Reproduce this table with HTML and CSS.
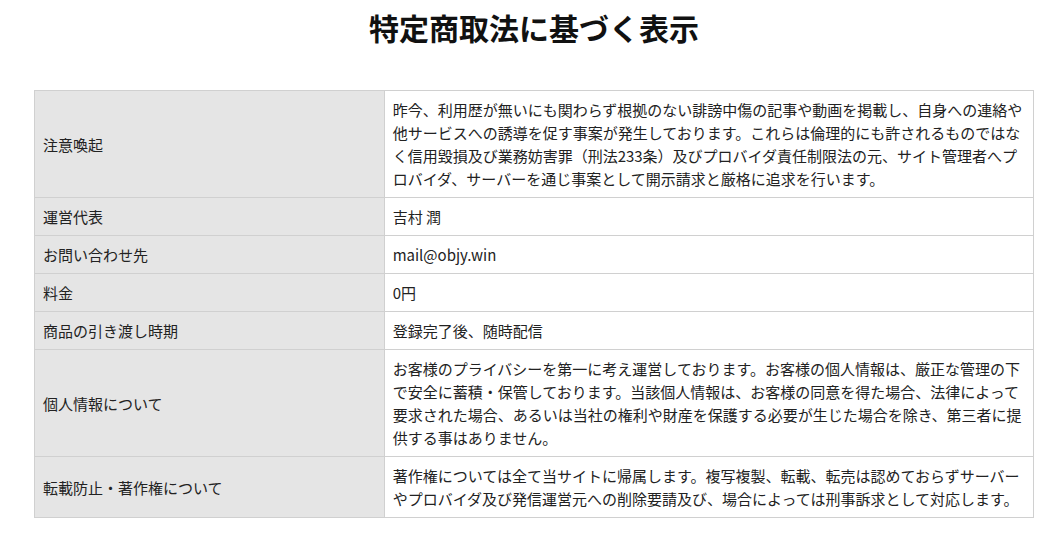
FILE: index.html
```html
<!DOCTYPE html>
<html lang="ja">
<head>
  <meta charset="UTF-8" />
  <meta name="viewport" content="width=device-width, initial-scale=1.0" />
  <title>特定商取法に基づく表示</title>
  <link rel="stylesheet" href="styles.css">
</head>
<body>
  <div class="wrap">
    <h1>特定商取法に基づく表示</h1>

    <table class="law">
      <tr>
        <th>注意喚起</th>
        <td>昨今、利用歴が無いにも関わらず根拠のない誹謗中傷の記事や動画を掲載し、自身への連絡や他サービスへの誘導を促す事案が発生しております。これらは倫理的にも許されるものではなく信用毀損及び業務妨害罪（刑法233条）及びプロバイダ責任制限法の元、サイト管理者へプロバイダ、サーバーを通じ事案として開示請求と厳格に追求を行います。</td>
      </tr>
      <tr>
        <th>運営代表</th>
        <td>吉村 潤</td>
      </tr>
      <tr>
        <th>お問い合わせ先</th>
        <td>mail@objy.win</td>
      </tr>
      <tr>
        <th>料金</th>
        <td>0円</td>
      </tr>
      <tr>
        <th>商品の引き渡し時期</th>
        <td>登録完了後、随時配信</td>
      </tr>
      <tr>
        <th>個人情報について</th>
        <td>お客様のプライバシーを第一に考え運営しております。お客様の個人情報は、厳正な管理の下で安全に蓄積・保管しております。当該個人情報は、お客様の同意を得た場合、法律によって要求された場合、あるいは当社の権利や財産を保護する必要が生じた場合を除き、第三者に提供する事はありません。</td>
      </tr>
      <tr>
        <th>転載防止・著作権について</th>
        <td>著作権については全て当サイトに帰属します。複写複製、転載、転売は認めておらずサーバーやプロバイダ及び発信運営元への削除要請及び、場合によっては刑事訴求として対応します。</td>
      </tr>
    </table>
  </div>
</body>
</html>
```

FILE: styles.css
```css
body {
  font-family: "Noto Sans CJK JP", "Noto Sans", sans-serif;
  margin: 0;
  padding: 0;
  background: #fff;
  color: #222;
}
.wrap {
  padding: 0 24px 0 34px;
}
h1 {
  font-size: 30px;
  font-weight: bold;
  text-align: center;
  margin: 0;
  padding: 5px 0 41px;
  line-height: 44px;
  color: #111;
}
.law {
  width: 100%;
  border-collapse: collapse;
  font-size: 15px;
  line-height: 23px;
}
.law th,
.law td {
  border: 1px solid #d0d0d0;
  padding: 7px 8px;
  text-align: left;
  vertical-align: middle;
}
.law th {
  width: 35%;
  background: #e5e5e5;
  font-weight: normal;
}
.law td {
  background: #fff;
}
```
